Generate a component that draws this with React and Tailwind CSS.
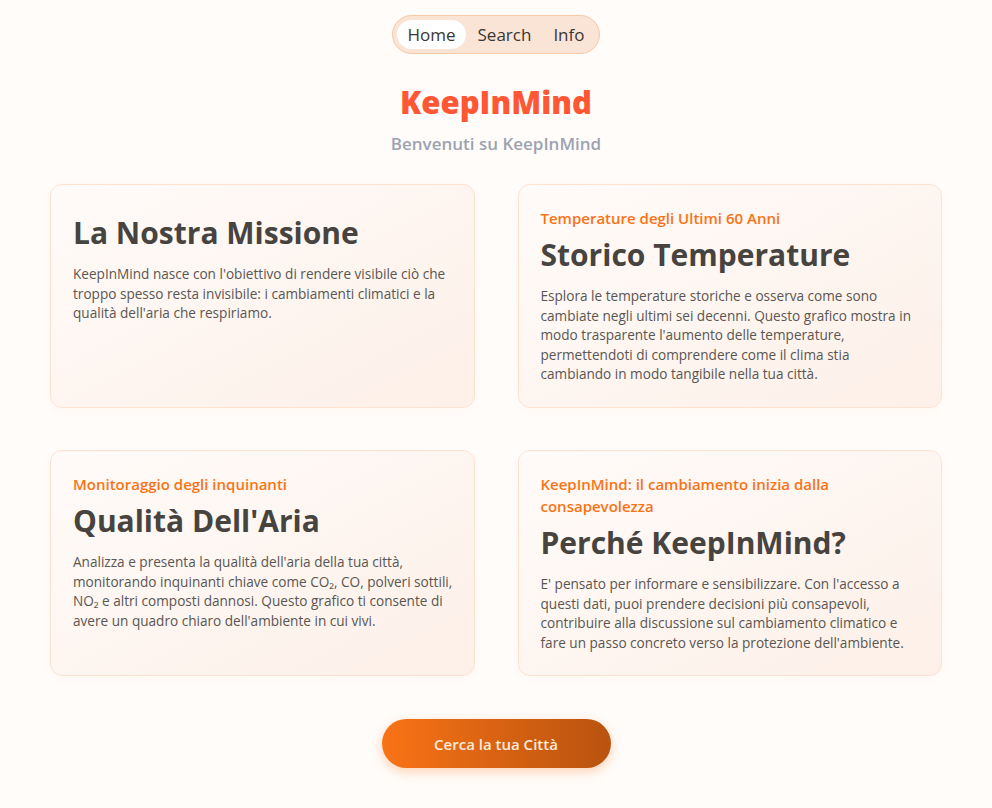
import React from "react";

const font = { fontFamily: '"Open Sans", "Noto Sans", sans-serif' };

function Card({ kicker, title, children }) {
  return (
    <div className="rounded-[12px] border border-[#fde2cf] bg-gradient-to-br from-[#fffbf9] to-[#fdf0e8] pt-[22px] pb-[23px] pl-[22px] pr-[18px] shadow-[0_2px_8px_rgba(249,115,22,0.04)]">
      {kicker && (
        <div className="text-[15px] leading-[22px] font-semibold text-[#f97316]">{kicker}</div>
      )}
      <h2 className="text-[30px] leading-[52px] font-bold text-[#47433f]">{title}</h2>
      <p className="mt-[5px] text-[13.6px] leading-[19.6px] text-[#5a5652]">{children}</p>
    </div>
  );
}

export default function App() {
  return (
    <div style={font} className="min-h-[808px] bg-[#fffcfa] pt-[15px] pb-[40px]">
      <div className="flex justify-center">
        <nav className="flex items-center gap-[2px] rounded-full border border-[#f8c9a4] bg-[#f9e4d6] p-[4px] text-[17px] text-[#3a3633]">
          <span className="rounded-full bg-white px-[10px] leading-[29px]">Home</span>
          <span className="px-[10px] leading-[29px]">Search</span>
          <span className="px-[10px] leading-[29px]">Info</span>
        </nav>
      </div>
      <h1 className="mt-[28px] text-center text-[31px] leading-[40px] font-extrabold text-[#ff5733]">KeepInMind</h1>
      <p className="mt-[10px] text-center text-[17px] leading-[24px] font-semibold text-[#9ca3af]">Benvenuti su KeepInMind</p>

      <div className="mt-[28px] grid grid-cols-2 gap-x-[43px] gap-y-[42px] px-[50px]">
        <Card title="La Nostra Missione">
          KeepInMind nasce con l'obiettivo di rendere visibile ciò che troppo spesso resta invisibile: i cambiamenti climatici e la qualità dell'aria che respiriamo.
        </Card>
        <Card kicker="Temperature degli Ultimi 60 Anni" title="Storico Temperature">
          Esplora le temperature storiche e osserva come sono cambiate negli ultimi sei decenni. Questo grafico mostra in modo trasparente l'aumento delle temperature, permettendoti di comprendere come il clima stia cambiando in modo tangibile nella tua città.
        </Card>
        <Card kicker="Monitoraggio degli inquinanti" title="Qualità Dell'Aria">
          Analizza e presenta la qualità dell'aria della tua città, monitorando inquinanti chiave come CO₂, CO, polveri sottili, NO₂ e altri composti dannosi. Questo grafico ti consente di avere un quadro chiaro dell'ambiente in cui vivi.
        </Card>
        <Card kicker="KeepInMind: il cambiamento inizia dalla consapevolezza" title="Perché KeepInMind?">
          E' pensato per informare e sensibilizzare. Con l'accesso a questi dati, puoi prendere decisioni più consapevoli, contribuire alla discussione sul cambiamento climatico e fare un passo concreto verso la protezione dell'ambiente.
        </Card>
      </div>

      <div className="mt-[43px] flex justify-center">
        <button className="h-[49px] w-[229px] rounded-full bg-gradient-to-r from-[#f97316] to-[#b9530f] text-[15px] font-semibold text-[#fdebdc] shadow-[0_4px_12px_rgba(249,115,22,0.3)]">
          Cerca la tua Città
        </button>
      </div>
    </div>
  );
}
